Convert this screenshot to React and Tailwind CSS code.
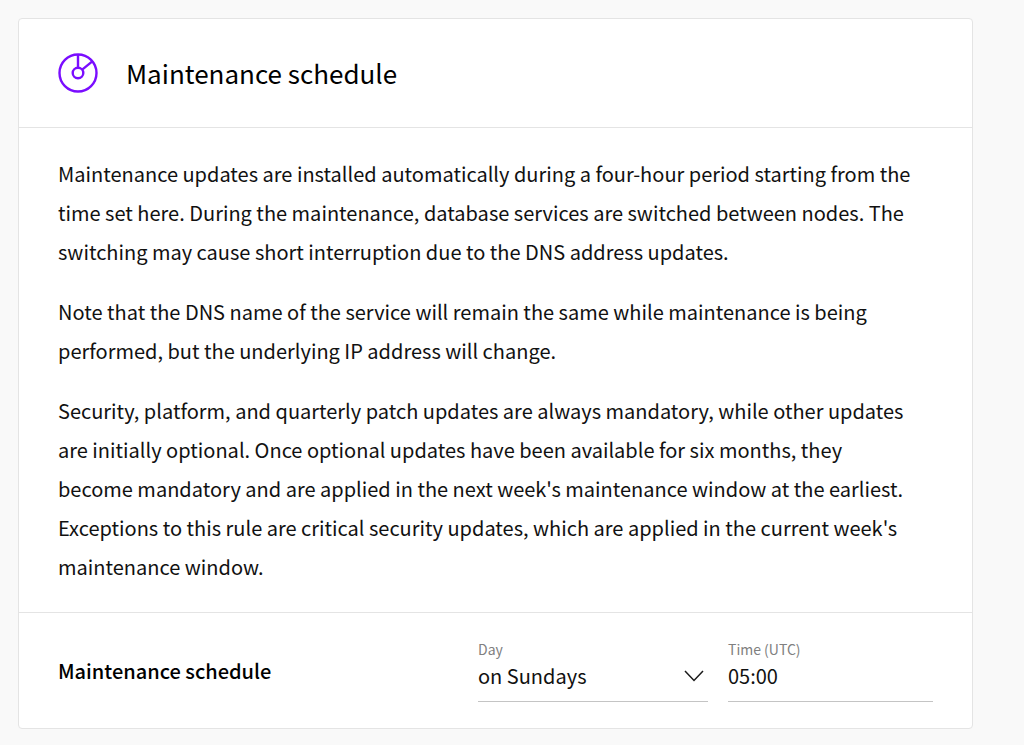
import React, { useState } from 'react';

const DAYS = ['Mondays', 'Tuesdays', 'Wednesdays', 'Thursdays', 'Fridays', 'Saturdays', 'Sundays'];

const paragraphs = [
    'Maintenance updates are installed automatically during a four-hour period starting from the time set here. During the maintenance, database services are switched between nodes. The switching may cause short interruption due to the DNS address updates.',
    'Note that the DNS name of the service will remain the same while maintenance is being performed, but the underlying IP address will change.',
    "Security, platform, and quarterly patch updates are always mandatory, while other updates are initially optional. Once optional updates have been available for six months, they become mandatory and are applied in the next week's maintenance window at the earliest. Exceptions to this rule are critical security updates, which are applied in the current week's maintenance window.",
];

const DialIcon = () => (
    <svg className="size-10 shrink-0" viewBox="0 0 40 40" fill="none" stroke="#7a0dff" strokeWidth="2.4" aria-hidden="true">
        <circle cx="20" cy="20" r="18.5" />
        <circle cx="20" cy="20" r="5.3" />
        <path d="M20 1.5v13.2M24.2 16.6 34 8.6" />
    </svg>
);

const ChevronIcon = () => (
    <svg
        className="pointer-events-none col-start-1 row-start-1 mr-1 h-3 w-5 self-center justify-self-end"
        viewBox="0 0 20 12"
        fill="none"
        stroke="#1a1a1a"
        strokeWidth="1.5"
        aria-hidden="true"
    >
        <path d="M1 1l9 9.5L19 1" />
    </svg>
);

const App = () => {
    const [day, setDay] = useState('Sundays');
    const [time, setTime] = useState('05:00');

    return (
        <main className="min-h-screen bg-[#f9f9f9] pt-[18px] pr-[51px] pb-4 pl-[18px] font-['Noto_Sans_CJK_SC',sans-serif] text-[#111]">
            <section className="rounded border border-[#e4e4e4] bg-white">
                <header className="flex items-center gap-7 border-b border-[#e4e4e4] px-[39px] py-[34px]">
                    <DialIcon />
                    <h1 className="text-[26px] leading-9 text-black">Maintenance schedule</h1>
                </header>

                <div className="space-y-[21px] border-b border-[#e4e4e4] py-[26px] pr-14 pl-[39px] text-[20px] leading-[39px]">
                    {paragraphs.map((text) => (
                        <p key={text}>{text}</p>
                    ))}
                </div>

                <div className="flex items-center gap-5 px-[39px] py-[26px]">
                    <h2 className="flex-1 text-[20px] leading-8 font-medium text-black">Maintenance schedule</h2>

                    <div className="w-[230px]">
                        <label htmlFor="day" className="block text-[14px] leading-5 text-[#808080]">Day</label>
                        <div className="grid h-[43px] border-b border-[#c4c4c4] pb-2">
                            <select
                                id="day"
                                value={day}
                                onChange={(e) => setDay(e.target.value)}
                                className="col-start-1 row-start-1 w-full appearance-none bg-transparent text-[20px] outline-none"
                            >
                                {DAYS.map((d) => (
                                    <option key={d} value={d}>on {d}</option>
                                ))}
                            </select>
                            <ChevronIcon />
                        </div>
                    </div>

                    <div className="w-[205px]">
                        <label htmlFor="time" className="block text-[14px] leading-5 text-[#808080]">Time (UTC)</label>
                        <div className="grid h-[43px] border-b border-[#c4c4c4] pb-2">
                            <input
                                id="time"
                                type="text"
                                value={time}
                                onChange={(e) => setTime(e.target.value)}
                                className="w-full bg-transparent text-[20px] outline-none"
                            />
                        </div>
                    </div>
                </div>
            </section>
        </main>
    );
};

export default App;
